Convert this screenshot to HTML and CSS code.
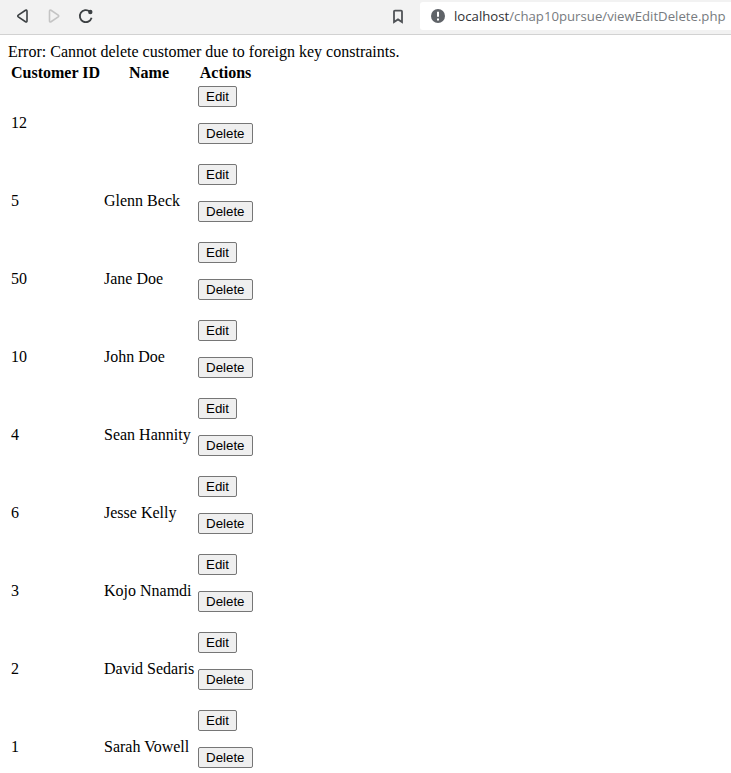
FILE: index.html
```html
<!DOCTYPE html>
<html lang="en">
<head>
<meta charset="utf-8">
<title>Customers</title>
<link rel="stylesheet" href="styles.css">
</head>
<body>
<header class="toolbar">
  <svg class="icon back" width="14" height="16" viewBox="0 0 14 16"><path d="M12 3.200v9.600q0 1.800-1.500.9L3.300 8.900q-1.100-.9 0-1.800l7.200-4.800q1.500-.9 1.500.9z"/></svg>
  <svg class="icon forward" width="14" height="16" viewBox="0 0 14 16"><path d="M2.500 3.200v9.600q0 1.800 1.500.9l7.200-4.800q1.100-.9 0-1.800L4 2.300q-1.500-.9-1.500.9z"/></svg>
  <svg class="icon reload" width="16" height="16" viewBox="0 0 16 16"><path d="M13.600 9.800A6 6 0 1 1 11.800 3.600"/><circle class="solid" cx="12.300" cy="4" r="2.200"/></svg>
  <svg class="icon bookmark" width="12" height="15" viewBox="0 0 12 15"><path d="M2 2.600q0-.9.900-.9h6.200q.9 0 .9.900v10.500L6 10.400l-4 2.700z"/></svg>
  <div class="address">
    <svg class="info" width="14" height="14" viewBox="0 0 14 14"><circle cx="7" cy="7" r="7"/><path d="M7 2.800v5M7 9.400v2"/></svg>
    <span class="url"><span class="host">localhost</span>/chap10pursue/viewEditDelete.php</span>
  </div>
</header>
<main class="page">
  <div class="message">Error: Cannot delete customer due to foreign key constraints.</div>
  <table class="customers">
    <colgroup><col class="col-id"><col class="col-name"><col class="col-actions"></colgroup>
    <thead><tr><th>Customer ID</th><th>Name</th><th>Actions</th></tr></thead>
    <tbody>
      <tr><td>12</td><td></td><td><form><button type="button">Edit</button></form><form><button type="button">Delete</button></form></td></tr>
      <tr><td>5</td><td>Glenn Beck</td><td><form><button type="button">Edit</button></form><form><button type="button">Delete</button></form></td></tr>
      <tr><td>50</td><td>Jane Doe</td><td><form><button type="button">Edit</button></form><form><button type="button">Delete</button></form></td></tr>
      <tr><td>10</td><td>John Doe</td><td><form><button type="button">Edit</button></form><form><button type="button">Delete</button></form></td></tr>
      <tr><td>4</td><td>Sean Hannity</td><td><form><button type="button">Edit</button></form><form><button type="button">Delete</button></form></td></tr>
      <tr><td>6</td><td>Jesse Kelly</td><td><form><button type="button">Edit</button></form><form><button type="button">Delete</button></form></td></tr>
      <tr><td>3</td><td>Kojo Nnamdi</td><td><form><button type="button">Edit</button></form><form><button type="button">Delete</button></form></td></tr>
      <tr><td>2</td><td>David Sedaris</td><td><form><button type="button">Edit</button></form><form><button type="button">Delete</button></form></td></tr>
      <tr><td>1</td><td>Sarah Vowell</td><td><form><button type="button">Edit</button></form><form><button type="button">Delete</button></form></td></tr>
    </tbody>
  </table>
</main>
</body>
</html>
```
FILE: styles.css
```css
html, body {
  margin: 0;
  height: 773px;
  overflow: hidden;
  background: #fff;
}
.toolbar {
  box-sizing: border-box;
  display: flex;
  align-items: center;
  height: 35px;
  padding: 0 0 2px 15px;
  background: #f2f2f2;
  border-bottom: 1px solid #d2d2d2;
}
.icon {
  flex: none;
  fill: none;
  stroke: #3c4043;
  stroke-width: 1.6;
}
.forward { margin-left: 18px; stroke: #c4c4c4; }
.reload { margin-left: 17px; stroke-width: 1.8; }
.icon .solid { fill: #3c4043; stroke: none; }
.bookmark { margin-left: 298px; stroke: #505357; stroke-width: 1.8; }
.address {
  box-sizing: border-box;
  display: flex;
  align-items: center;
  flex: 1;
  height: 28px;
  margin-left: 16px;
  padding-left: 11px;
  background: #fff;
  border-radius: 3px 0 0 3px;
}
.info { flex: none; fill: #5f6368; }
.info path { stroke: #fff; stroke-width: 2; }
.url {
  margin-left: 9px;
  font: 13.2px/20px "Open Sans", "Noto Sans", sans-serif;
  color: #777b80;
  white-space: nowrap;
}
.host { color: #303134; }
.page {
  padding: 8px;
  font: 16px/18px "Liberation Serif", "Times New Roman", serif;
  color: #000;
}
.customers {
  width: 248px;
  table-layout: fixed;
  border-spacing: 2px;
}
.col-id { width: 91px; }
.col-name { width: 92px; }
.col-actions { width: 57px; }
th, td { padding: 1px; white-space: nowrap; }
th { text-align: center; }
td { height: 74px; }
form { height: 21px; margin: 0 0 16px; }
button {
  display: block;
  box-sizing: border-box;
  height: 21px;
  padding: 1px 7px;
  border: 1px solid #767676;
  border-radius: 2px;
  background: #efefef;
  font: 13.333px/17px "Liberation Sans", Arial, sans-serif;
  color: #000;
}
```
